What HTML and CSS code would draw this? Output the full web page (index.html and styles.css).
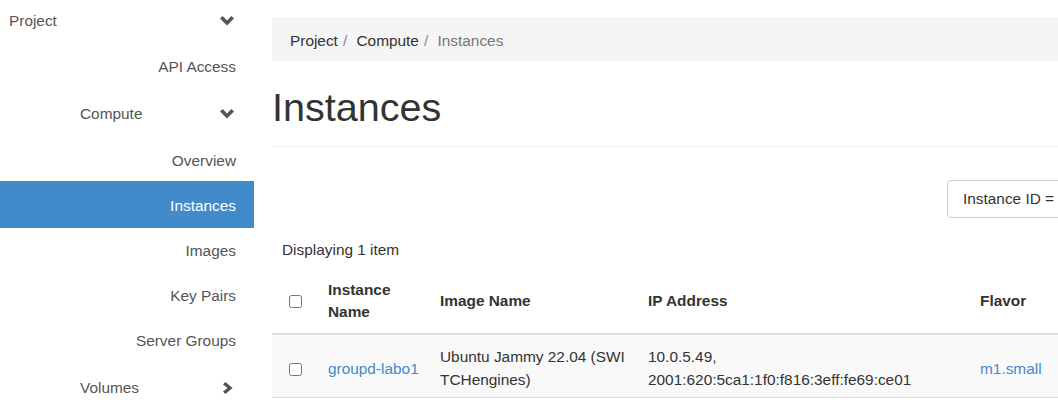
FILE: index.html
```html
<!DOCTYPE html>
<html lang="en">
<head>
<meta charset="utf-8">
<title>Instances</title>
<link rel="stylesheet" href="styles.css">
</head>
<body>
<div class="page">
  <nav class="sidebar">
    <div class="nav-header">
      <span>Project</span>
      <svg class="chev-down" width="14" height="10" viewBox="0 0 14 10"><polygon points="0,2.6 2.6,0 7,4.4 11.4,0 14,2.6 7,9.6" fill="#555"/></svg>
    </div>
    <a class="nav-item tall">API Access</a>
    <div class="nav-group">
      <span>Compute</span>
      <svg class="chev-down" width="14" height="10" viewBox="0 0 14 10"><polygon points="0,2.6 2.6,0 7,4.4 11.4,0 14,2.6 7,9.6" fill="#555"/></svg>
    </div>
    <a class="nav-item short">Overview</a>
    <a class="nav-item tall active">Instances</a>
    <a class="nav-item">Images</a>
    <a class="nav-item">Key Pairs</a>
    <a class="nav-item">Server Groups</a>
    <div class="nav-group last">
      <span>Volumes</span>
      <svg class="chev-right" width="10" height="12" viewBox="0 0 10 12"><polygon points="2.4,0 9.6,6 2.4,12 0,9.6 4.6,6 0,2.4" fill="#555"/></svg>
    </div>
  </nav>

  <main class="main">
    <ol class="breadcrumb">
      <li>Project</li>
      <li>Compute</li>
      <li class="current">Instances</li>
    </ol>

    <h1 class="page-title">Instances</h1>

    <div class="toolbar">
      <div class="filter-group">
        <button class="filter-btn">Instance ID = <span class="caret"></span></button>
        <input class="filter-input" type="text">
      </div>
    </div>

    <table class="table">
      <colgroup>
        <col class="c-check"><col class="c-name"><col class="c-image"><col class="c-ip"><col class="c-flavor">
      </colgroup>
      <thead>
        <tr class="summary-row"><th colspan="5">Displaying 1 item</th></tr>
        <tr class="head-row">
          <th class="check"><input type="checkbox"></th>
          <th>Instance Name</th>
          <th>Image Name</th>
          <th>IP Address</th>
          <th>Flavor</th>
        </tr>
      </thead>
      <tbody>
        <tr class="data-row">
          <td class="check"><input type="checkbox"></td>
          <td><a class="link">groupd-labo1</a></td>
          <td class="breakable">Ubuntu Jammy 22.04 (SWITCHengines)</td>
          <td><ul class="ip-list"><li>10.0.5.49,</li><li>2001:620:5ca1:1f0:f816:3eff:fe69:ce01</li></ul></td>
          <td><a class="link">m1.small</a></td>
        </tr>
      </tbody>
    </table>
  </main>
</div>
</body>
</html>
```

FILE: styles.css
```css
* { box-sizing: border-box; }

html, body {
  margin: 0;
  padding: 0;
  overflow: hidden;
  background: #fff;
}

body {
  font-family: "Liberation Sans", Helvetica, Arial, sans-serif;
  font-size: 15.4px;
  line-height: 22px;
  color: #333;
  width: 1058px;
  height: 403px;
}

.page {
  display: flex;
  align-items: flex-start;
}

/* Sidebar */
.sidebar {
  width: 254px;
  flex: none;
  display: flex;
  flex-direction: column;
  color: #555;
}

.nav-header {
  height: 43px;
  padding: 0 20px 1px 9px;
  display: flex;
  align-items: center;
  justify-content: space-between;
}

.nav-group {
  height: 47px;
  padding: 0 20px 0 80px;
  display: flex;
  align-items: center;
  justify-content: space-between;
}

.nav-group.last { padding-top: 3px; }

.nav-group .chev-right { margin-right: 1px; }

.nav-item {
  height: 45px;
  padding: 0 18px;
  display: flex;
  align-items: center;
  justify-content: flex-end;
  color: #555;
  text-decoration: none;
}

.nav-item.tall { height: 47px; }
.nav-item.short { height: 44px; padding-top: 4px; }

.nav-item.active {
  background: #428bca;
  color: #fff;
  padding-top: 2px;
}

/* Main */
.main {
  flex: none;
  width: 918px;
  padding-left: 18px;
}

.breadcrumb {
  list-style: none;
  margin: 17px 0 0;
  height: 44px;
  padding: 4px 18px 0;
  background: #f5f5f5;
  border-radius: 4px;
  display: flex;
  align-items: center;
  color: #333;
}

.breadcrumb li + li::before {
  content: "/\00a0";
  padding: 0 5px 0 5px;
  color: #888;
}

.breadcrumb .current { color: #777; }

.page-title {
  margin: 25px 0 0;
  padding-bottom: 16px;
  border-bottom: 1px solid #eee;
  font-size: 39.6px;
  line-height: 1.1;
  font-weight: 400;
  color: #333;
}

.toolbar {
  margin-top: 33px;
  display: flex;
  justify-content: flex-end;
}

.filter-group {
  width: 225px;
  display: flex;
}

.filter-btn {
  flex: none;
  height: 38px;
  padding: 0 15px;
  border: 1px solid #ccc;
  border-radius: 4px 0 0 4px;
  background: #fff;
  font: inherit;
  color: #333;
  white-space: nowrap;
}

.caret {
  display: inline-block;
  width: 0;
  height: 0;
  margin-left: 4px;
  border-top: 5px solid #333;
  border-left: 5px solid transparent;
  border-right: 5px solid transparent;
  vertical-align: middle;
}

.filter-input {
  flex: 1;
  min-width: 0;
  height: 38px;
  border: 1px solid #ccc;
  border-left: 0;
  font: inherit;
}

/* Table */
.table {
  margin-top: 12px;
  width: 900px;
  border-collapse: collapse;
  table-layout: fixed;
}

.c-check { width: 46px; }
.c-name { width: 112px; }
.c-image { width: 208px; }
.c-ip { width: 332px; }
.c-flavor { width: 202px; }

.table th, .table td {
  padding: 0 10px;
  text-align: left;
  vertical-align: middle;
}

.summary-row th {
  font-weight: 400;
  height: 40px;
}

.head-row th {
  font-weight: 700;
  height: 64px;
  padding-top: 0;
  border-bottom: 2px solid #ddd;
}

.table .check {
  text-align: center;
  padding: 0;
}

.check input {
  margin: 3px 3px 3px 4px;
  width: 13px;
  height: 13px;
  vertical-align: middle;
}

.data-row td {
  background: #f9f9f9;
  height: 64px;
  padding-top: 5px;
  line-height: 23px;
  border-bottom: 1px solid #ddd;
}

.data-row td.check { padding-top: 4px; }

.breakable { word-break: break-all; }

.ip-list {
  list-style: none;
  margin: 0;
  padding: 0;
}

.link {
  color: #428bca;
  text-decoration: none;
}
```
